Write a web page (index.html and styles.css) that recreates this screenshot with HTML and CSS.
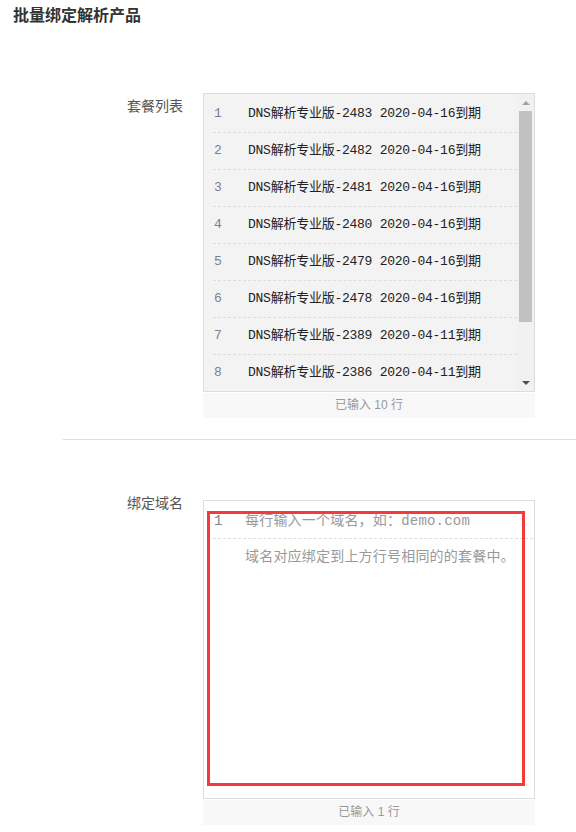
FILE: index.html
```html
<!DOCTYPE html>
<html lang="zh-CN">
<head>
  <meta charset="UTF-8">
  <meta name="viewport" content="width=device-width, initial-scale=1.0">
  <title>批量绑定解析产品</title>
  <link rel="stylesheet" href="styles.css">
</head>
<body>
  <h1 class="page-title">批量绑定解析产品</h1>

  <!-- 套餐列表 -->
  <div class="form-row">
    <label class="form-label">套餐列表</label>
    <div class="form-field">
      <div class="code-box code-box--readonly">
        <div class="code-lines">
          <div class="code-line"><span class="line-no">1</span><span class="line-text">DNS解析专业版-2483 2020-04-16到期</span></div>
          <div class="code-line"><span class="line-no">2</span><span class="line-text">DNS解析专业版-2482 2020-04-16到期</span></div>
          <div class="code-line"><span class="line-no">3</span><span class="line-text">DNS解析专业版-2481 2020-04-16到期</span></div>
          <div class="code-line"><span class="line-no">4</span><span class="line-text">DNS解析专业版-2480 2020-04-16到期</span></div>
          <div class="code-line"><span class="line-no">5</span><span class="line-text">DNS解析专业版-2479 2020-04-16到期</span></div>
          <div class="code-line"><span class="line-no">6</span><span class="line-text">DNS解析专业版-2478 2020-04-16到期</span></div>
          <div class="code-line"><span class="line-no">7</span><span class="line-text">DNS解析专业版-2389 2020-04-11到期</span></div>
          <div class="code-line"><span class="line-no">8</span><span class="line-text">DNS解析专业版-2386 2020-04-11到期</span></div>
        </div>
        <div class="scrollbar">
          <span class="scroll-btn scroll-btn--up"></span>
          <span class="scroll-thumb"></span>
          <span class="scroll-btn scroll-btn--down"></span>
        </div>
      </div>
      <div class="code-count">已输入 10 行</div>
    </div>
  </div>

  <hr class="divider">

  <!-- 绑定域名 -->
  <div class="form-row form-row--domain">
    <label class="form-label">绑定域名</label>
    <div class="form-field">
      <div class="code-box code-box--input">
        <div class="code-line code-line--first"><span class="line-no">1</span><span class="placeholder">每行输入一个域名，如：demo.com</span></div>
        <div class="code-line code-line--hint"><span class="line-no"></span><span class="placeholder">域名对应绑定到上方行号相同的的套餐中。</span></div>
        <div class="mark-box"></div>
      </div>
      <div class="code-count">已输入 1 行</div>
    </div>
  </div>
</body>
</html>
```

FILE: styles.css
```css
/* 基本スタイル */
body {
  margin: 0;
  font-family: "Liberation Sans", "Noto Sans CJK SC", sans-serif;
  color: #333;
  background: #fff;
}

.page-title {
  margin: 0;
  padding: 6px 13px 0;
  font-size: 16px;
  line-height: 20px;
  font-weight: bold;
  color: #333;
}

/* フォーム行 */
.form-row {
  display: flex;
  margin-top: 67px;
}

.form-label {
  width: 183px;
  padding: 3px 20px 0 0;
  text-align: right;
  font-size: 14px;
  line-height: 20px;
  color: #555;
}

.form-row--domain {
  margin-top: 60px;
}

.form-row--domain .form-label {
  padding-top: 0;
  margin-top: -7px;
}

.form-field {
  width: 332px;
}

/* コードボックス */
.code-box {
  position: relative;
  height: 299px;
  border: 1px solid #ddd;
  box-sizing: border-box;
  overflow: hidden;
}

.code-box--readonly {
  display: flex;
  background: #f3f3f3;
}

.code-box--input {
  background: #fff;
}

.code-lines {
  flex: 1;
  padding-top: 2px;
  overflow: hidden;
}

.code-line {
  display: flex;
  height: 36px;
  margin-left: 9px;
  border-bottom: 1px dashed #ddd;
  font-family: "Liberation Mono", "Noto Sans CJK SC", monospace;
  font-size: 13px;
  line-height: 36px;
  letter-spacing: -0.25px;
  white-space: nowrap;
}

.line-no {
  width: 34px;
  padding-left: 1px;
  flex-shrink: 0;
  color: #7a7f91;
}

.line-text {
  color: #222;
}

.code-box--input .code-line {
  margin-right: 1px;
  font-size: 14px;
  letter-spacing: 0.2px;
}

.code-box--input .line-no {
  width: 31px;
}

.code-line--first {
  height: 37px;
  line-height: 40px;
}

.code-line--hint {
  height: 35px;
  line-height: 37px;
  border-bottom: none;
}

.placeholder {
  color: #999;
}

/* スクロールバー */
.scrollbar {
  width: 17px;
  display: flex;
  flex-direction: column;
  background: #f1f1f1;
}

.scroll-btn {
  height: 17px;
  display: flex;
  align-items: center;
  justify-content: center;
}

.scroll-btn::before {
  content: "";
  border-left: 4px solid transparent;
  border-right: 4px solid transparent;
}

.scroll-btn--up::before {
  border-bottom: 4px solid #a3a3a3;
}

.scroll-btn--down {
  margin-top: auto;
}

.scroll-btn--down::before {
  border-top: 4px solid #505050;
}

.scroll-thumb {
  height: 211px;
  margin: 0 2px;
  background: #c1c1c1;
}

/* 行数 */
.code-count {
  height: 25px;
  margin-top: 1px;
  background: #f8f8f8;
  text-align: center;
  font-size: 12px;
  line-height: 25px;
  color: #999;
}

.divider {
  margin: 21px 0 0 63px;
  border: none;
  border-top: 1px solid #ddd;
}

/* 注記の赤枠 */
.mark-box {
  position: absolute;
  left: 3px;
  top: 10px;
  width: 318px;
  height: 275px;
  border: 3px solid #f63a3a;
  box-sizing: border-box;
}
```
